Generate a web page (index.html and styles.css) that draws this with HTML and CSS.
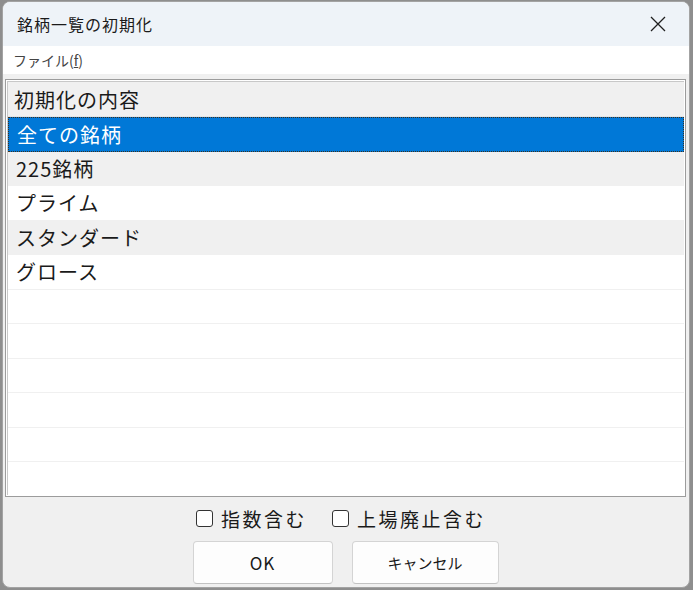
FILE: index.html
```html
<!DOCTYPE html>
<html lang="ja">
<head>
    <meta charset="UTF-8">
    <meta name="viewport" content="width=device-width, initial-scale=1.0">
    <title>銘柄一覧の初期化</title>
    <link rel="stylesheet" href="styles.css">
</head>
<body>
    <div class="window">
        <div class="titlebar">
            <span class="title">銘柄一覧の初期化</span>
            <button type="button" class="close" aria-label="閉じる">
                <svg width="16" height="16" viewBox="0 0 16 16">
                    <path d="M1 1 L15 15 M15 1 L1 15" stroke="#1f1f1f" stroke-width="1.3" fill="none" />
                </svg>
            </button>
        </div>
        <div class="menubar">
            <span class="menu-item">ファイル(<u>f</u>)</span>
        </div>

        <div class="client">
            <div class="list">
                <div class="list-inner">
                    <div class="list-head">初期化の内容</div>
                    <div class="row selected">全ての銘柄</div>
                    <div class="row alt">225銘柄</div>
                    <div class="row">プライム</div>
                    <div class="row alt">スタンダード</div>
                    <div class="row">グロース</div>
                    <div class="row"></div>
                    <div class="row"></div>
                    <div class="row"></div>
                    <div class="row"></div>
                    <div class="row"></div>
                    <div class="row"></div>
                </div>
            </div>

            <div class="options">
                <label class="check"><span class="box"></span>指数含む</label>
                <label class="check"><span class="box"></span>上場廃止含む</label>
            </div>

            <div class="buttons">
                <button type="button" class="btn btn-ok">OK</button>
                <button type="button" class="btn btn-cancel">キャンセル</button>
            </div>
        </div>
    </div>
</body>
</html>
```

FILE: styles.css
```css
* {
    box-sizing: border-box;
}

body {
    margin: 0;
    padding: 1px 3px 2px 2px;
    background: #8e8e8e;
    font-family: "Noto Sans CJK JP", "Noto Sans", sans-serif;
    color: #1a1a1a;
}

.window {
    width: 688px;
    height: 587px;
    border: 1px solid #a3a3a3;
    border-radius: 8px;
    overflow: hidden;
    background: #f0f0f0;
    display: flex;
    flex-direction: column;
}

/* タイトルバー */
.titlebar {
    height: 44px;
    flex: none;
    display: flex;
    align-items: center;
    justify-content: space-between;
    padding-left: 14px;
    background: #eef3f8;
}

.title {
    font-size: 16px;
    letter-spacing: 1px;
    color: #1a1a1a;
}

.close {
    width: 46px;
    height: 44px;
    margin-right: 8px;
    border: 0;
    background: transparent;
    display: flex;
    align-items: center;
    justify-content: center;
    padding: 0;
}

/* メニュー */
.menubar {
    height: 28px;
    flex: none;
    display: flex;
    align-items: center;
    padding-left: 10px;
    background: #fff;
}

.menu-item {
    font-size: 14px;
    color: #444;
}

.client {
    flex: 1;
    display: flex;
    flex-direction: column;
    padding: 5px 3px 0 2px;
}

/* 一覧 */
.list {
    height: 418px;
    border: 1px solid #9c9c9c;
    padding: 1px;
    background: #fff;
}

.list-inner {
    height: 100%;
    overflow: hidden;
    border-top: 1px solid #c8c8c8;
    border-left: 1px solid #c8c8c8;
}

.list-head {
    height: 35px;
    display: flex;
    align-items: center;
    padding-left: 6px;
    font-size: 20px;
    letter-spacing: 1px;
    background: #f0f0f0;
    border-bottom: 1px solid #e4e4e4;
}

.row {
    height: 34.5px;
    display: flex;
    align-items: center;
    padding-left: 8px;
    font-size: 20px;
    letter-spacing: 1px;
    background: #fff;
    border-bottom: 1px solid #f0f0f0;
}

.row.alt {
    background: #f0f0f0;
}

.row.selected {
    background: #0078d7;
    color: #fff;
    border: 1px dotted #3b3020;
}

/* チェックボックス */
.options {
    height: 40px;
    display: flex;
    align-items: center;
    justify-content: center;
    gap: 25px;
    padding-right: 9px;
    padding-top: 2px;
}

.check {
    display: flex;
    align-items: center;
    gap: 8px;
    font-size: 19px;
    letter-spacing: 2.5px;
    color: #1a1a1a;
}

.box {
    width: 17px;
    height: 17px;
    border: 1px solid #333;
    border-radius: 3px;
    background: #fff;
}

/* ボタン */
.buttons {
    display: flex;
    justify-content: center;
    gap: 19px;
    padding-top: 4px;
}

.btn {
    height: 43px;
    border: 1px solid #d4d4d4;
    border-bottom-color: #c2c2c2;
    border-radius: 4px;
    background: #fdfdfd;
    font-family: "Noto Sans CJK JP", "Noto Sans", sans-serif;
    font-size: 15px;
    color: #1a1a1a;
}

.btn-ok {
    width: 140px;
    font-size: 17px;
    letter-spacing: 1px;
}

.btn-cancel {
    width: 147px;
}
```
